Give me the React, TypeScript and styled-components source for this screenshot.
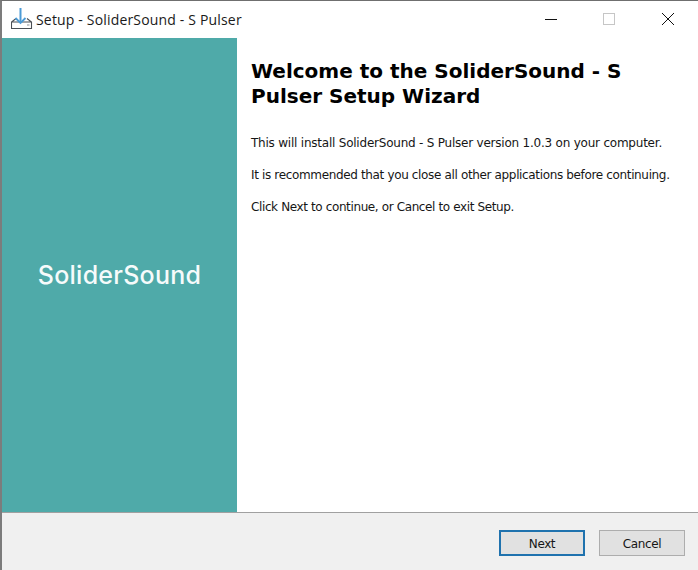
import styled, { createGlobalStyle } from "styled-components";

const GlobalStyle = createGlobalStyle`
  html, body {
    margin: 0;
    padding: 0;
    background: #fff;
  }
`;

const Window = styled.div`
  width: 698px;
  height: 570px;
  box-sizing: border-box;
  display: flex;
  flex-direction: column;
  border-top: 1px solid #6f6f6f;
  border-left: 2px solid #7c7c7c;
  overflow: hidden;
  background: #fff;
`;

const TitleBar = styled.div`
  height: 37px;
  flex: none;
  display: flex;
  align-items: center;
  padding-left: 9px;
  padding-bottom: 1px;
  box-sizing: border-box;
`;

const AppIcon = styled.svg`
  width: 22px;
  height: 22px;
  flex: none;
  margin-right: 3px;
`;

const WindowTitle = styled.span`
  font-family: "Open Sans", "Noto Sans", sans-serif;
  font-size: 14px;
  letter-spacing: 0.17px;
  color: #1a1a1a;
  flex: 1;
`;

const Controls = styled.div`
  display: flex;
  width: 176.5px;
  flex: none;
`;

const ControlIcon = styled.svg`
  width: 14px;
  height: 14px;
  flex: none;
`;

const ControlSlot = styled.div`
  width: 58.5px;
  display: flex;
  justify-content: center;
  align-items: center;
`;

const Body = styled.div`
  flex: 1;
  display: flex;
  min-height: 0;
`;

const Sidebar = styled.div`
  width: 235px;
  flex: none;
  background: #4faaa9;
  display: flex;
  align-items: center;
  justify-content: center;
  padding-bottom: 1px;
  box-sizing: border-box;
`;

const Logo = styled.div`
  font-family: Inter, Lato, sans-serif;
  font-weight: 500;
  font-size: 25px;
  letter-spacing: 0.25px;
  color: #f6fbfb;
`;

const Content = styled.div`
  flex: 1;
  padding: 21px 14px 0 14px;
  color: #000;
`;

const Heading = styled.h1`
  margin: 0 0 26px;
  font-family: "DejaVu Sans", Verdana, sans-serif;
  font-weight: 700;
  font-size: 20px;
  line-height: 25px;
  color: #000;
`;

const Paragraph = styled.p<{ $tracking: number }>`
  margin: 0 0 16px;
  font-family: "DejaVu Sans", Tahoma, sans-serif;
  font-size: 12px;
  line-height: 16px;
  letter-spacing: ${(props) => props.$tracking}px;
  color: #161616;
  white-space: nowrap;
`;

const Footer = styled.div`
  height: 58px;
  flex: none;
  box-sizing: border-box;
  border-top: 1px solid #a0a0a0;
  background: #f0f0f0;
  display: flex;
  justify-content: flex-end;
  align-items: flex-start;
  gap: 14px;
  padding: 17px 13px 0 0;
`;

const Button = styled.button<{ $primary?: boolean }>`
  width: 86px;
  height: 26px;
  box-sizing: border-box;
  padding: 2px 0 0;
  background: #e1e1e1;
  border: ${(props) => (props.$primary ? "2px solid #1f72ae" : "1px solid #adadad")};
  font-family: "DejaVu Sans", Tahoma, sans-serif;
  font-size: 12px;
  letter-spacing: -0.4px;
  color: #161616;
`;

const App = () => {
  return (
    <>
      <GlobalStyle />
      <Window>
        <TitleBar>
          <AppIcon viewBox="0 0 22 22" fill="none">
            <path d="M5 10.5 L0.5 14 V20.5 H20.5 V14 L16 10.5 M0.5 14 H20.5" stroke="#4a4f55" strokeWidth="1.1" />
            <path d="M16 17 H18.5" stroke="#8a8f95" strokeWidth="1" />
            <path d="M9.5 0 V14" stroke="#4b9bd6" strokeWidth="2" />
            <path d="M4.5 10 L9.5 15 L14.5 10" stroke="#4b9bd6" strokeWidth="1.8" />
          </AppIcon>
          <WindowTitle>Setup - SoliderSound - S Pulser</WindowTitle>
          <Controls>
            <ControlSlot>
              <ControlIcon viewBox="0 0 14 14">
                <path d="M1 7.5 H13" stroke="#111" strokeWidth="1" />
              </ControlIcon>
            </ControlSlot>
            <ControlSlot>
              <ControlIcon viewBox="0 0 14 14">
                <rect x="1.5" y="1.5" width="11" height="11" fill="none" stroke="#c6c6c6" strokeWidth="1" />
              </ControlIcon>
            </ControlSlot>
            <ControlSlot>
              <ControlIcon viewBox="0 0 14 14">
                <path d="M1 1 L13 13 M13 1 L1 13" stroke="#111" strokeWidth="1" />
              </ControlIcon>
            </ControlSlot>
          </Controls>
        </TitleBar>
        <Body>
          <Sidebar>
            <Logo>SoliderSound</Logo>
          </Sidebar>
          <Content>
            <Heading>
              Welcome to the SoliderSound - S
              <br />
              Pulser Setup Wizard
            </Heading>
            <Paragraph $tracking={-0.22}>This will install SoliderSound - S Pulser version 1.0.3 on your computer.</Paragraph>
            <Paragraph $tracking={-0.35}>It is recommended that you close all other applications before continuing.</Paragraph>
            <Paragraph $tracking={-0.38}>Click Next to continue, or Cancel to exit Setup.</Paragraph>
          </Content>
        </Body>
        <Footer>
          <Button $primary>Next</Button>
          <Button>Cancel</Button>
        </Footer>
      </Window>
    </>
  );
};

export default App;
